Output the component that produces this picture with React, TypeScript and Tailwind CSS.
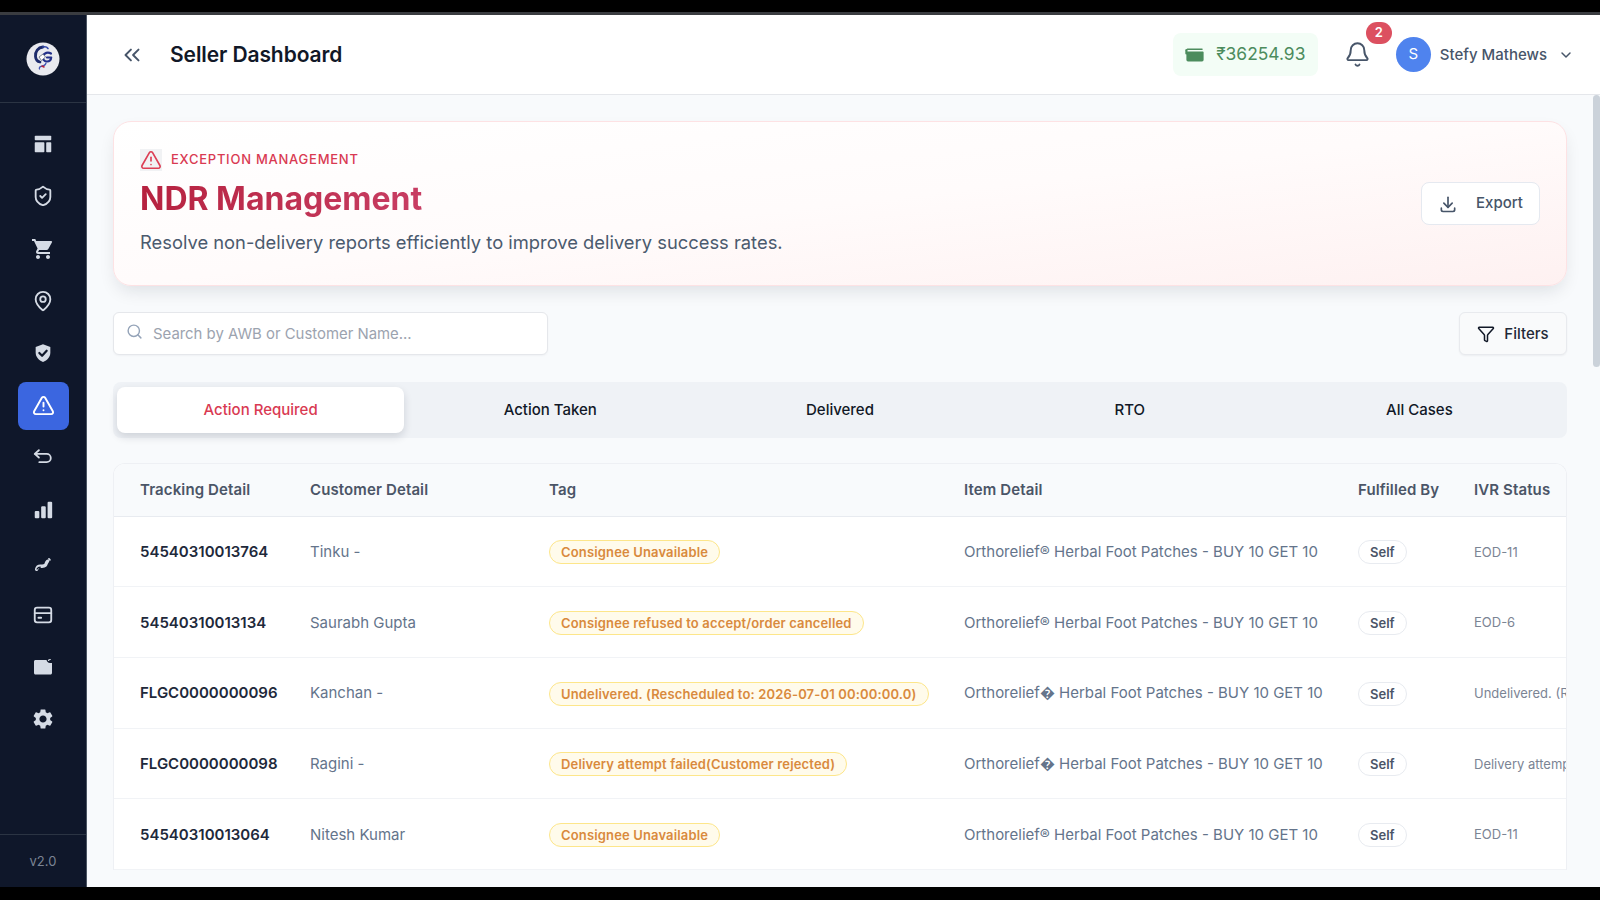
import { Bell, ChevronDown, ChevronsLeft, Funnel, Search, TriangleAlert, ShieldCheck, MapPin } from 'lucide-react';
import { MdShoppingCart, MdSettings } from 'react-icons/md';
import { TbDownload } from 'react-icons/tb';

const DashIcon = () => (
  <svg width="22" height="22" viewBox="0 0 24 24" fill="#d5dbe5">
    <rect x="3" y="3" width="18" height="5" rx="0.8" />
    <rect x="3" y="10" width="10.5" height="11" rx="0.8" />
    <rect x="15.5" y="10" width="5.5" height="11" rx="0.8" />
  </svg>
);

const ShieldFill = () => (
  <svg width="22" height="22" viewBox="0 0 24 24">
    <path fill="#d5dbe5" d="M12 2.5l8 3v6c0 5-3.4 8.6-8 10.2-4.600-1.600-8-5.200-8-10.200v-6z" />
    <path fill="none" stroke="#0f172a" strokeWidth="2.4" strokeLinecap="round" strokeLinejoin="round" d="M8 12l3 3 5-5.5" />
  </svg>
);

const UndoIcon = () => (
  <svg width="22" height="22" viewBox="0 0 24 24" fill="none" stroke="#d5dbe5" strokeWidth="2" strokeLinecap="round" strokeLinejoin="round">
    <path d="M7.500 3.500 3 7.500l4.500 4M3 7.500h13a4.500 4.500 0 0 1 0 9H8" />
  </svg>
);

const BarsIcon = () => (
  <svg width="22" height="22" viewBox="0 0 24 24" fill="#d5dbe5">
    <rect x="3" y="13" width="5" height="8" rx="1.2" />
    <rect x="10" y="8" width="5" height="13" rx="1.2" />
    <rect x="17" y="3" width="5" height="18" rx="1.2" />
  </svg>
);

const ToolIcon = () => (
  <svg width="22" height="22" viewBox="0 0 24 24" fill="none" strokeLinecap="round" strokeLinejoin="round">
    <path d="M5 19c.5-2 2-3.500 4-3.500 2.200 0 4 .5 5.500-1 1.200-1.100.8-3 2.500-4.500" stroke="#d5dbe5" strokeWidth="3.600" />
    <path d="M5.500 18.600c.7-1.300 2-2 3.500-2" stroke="#0f172a" strokeWidth="1.300" />
    <path d="M18.500 7.500l1 1" stroke="#d5dbe5" strokeWidth="2" />
  </svg>
);

const CardIcon = () => (
  <svg width="22" height="22" viewBox="0 0 24 24" fill="none" stroke="#d5dbe5" strokeWidth="2" strokeLinecap="round">
    <rect x="3" y="4" width="18" height="16" rx="2.5" />
    <path d="M3 10h18M7 15h3" />
  </svg>
);

const SideWalletIcon = () => (
  <svg width="24" height="24" viewBox="0 0 24 24">
    <path fill="#d5dbe5" d="M4.500 5H15.500c.3 1.600 1.500 2.800 3.500 3H21v10c0 .8-.7 1.500-1.500 1.500h-15C3.700 19.500 3 18.800 3 18V6.500C3 5.700 3.700 5 4.500 5z" />
    <path fill="none" stroke="#d5dbe5" strokeWidth="1.200" strokeLinecap="round" d="M17.500 5.500c.2-.7.800-1 1.800-1" />
  </svg>
);

const BalanceIcon = () => (
  <svg width="20" height="14" viewBox="0 0 18 13" fill="none">
    <path d="M2 1.200h13.500" stroke="#4c8c5d" strokeWidth="1.400" strokeLinecap="round" />
    <path d="M1 3.200 16 3.200c.6 0 1 .4 1 1V11c0 .8-.6 1.500-1.500 1.500h-13C1.600 12.500 1 11.800 1 11z" fill="#4c8c5d" />
    <path d="M1 2v3" stroke="#4c8c5d" strokeWidth="2" strokeLinecap="round" />
  </svg>
);

const Logo = () => (
  <svg width="34" height="34" viewBox="0 0 34 34">
    <circle cx="17" cy="17" r="16.500" fill="#e9eaef" />
    <path d="M17 5c-5 .5-8 4.500-7.500 9.500.3 3 2 5 4.500 5.500" fill="none" stroke="#1c2a6b" strokeWidth="2.800" strokeLinecap="round" />
    <path d="M17 5c2-.6 4 0 5 1.500" fill="none" stroke="#3448a8" strokeWidth="1.600" strokeLinecap="round" />
    <path d="M25 11.500c-3-1.800-7-.8-8 2.500-.8 2.800 1 5.500 4 5.500 2.200 0 4-1.500 4.200-4H21" fill="none" stroke="#24318a" strokeWidth="2.200" strokeLinecap="round" strokeLinejoin="round" />
    <path d="M13 15l4-3 2.500 3-4 3.500z" fill="#ffffff" stroke="#475569" strokeWidth="0.700" />
    <path d="M20 21c-.5 2.500-3 3-5 3.500-1.500.4-2 1.500-1.500 2.500" fill="none" stroke="#4456b5" strokeWidth="1.300" strokeLinecap="round" />
    <path d="M16 24l2 1" stroke="#b4233c" strokeWidth="1.600" strokeLinecap="round" />
  </svg>
);

const navIcons = [
  { key: 'dash', icon: <DashIcon /> },
  { key: 'shield', icon: <ShieldCheck size={22} color="#d5dbe5" strokeWidth={2} /> },
  { key: 'cart', icon: <MdShoppingCart size={24} color="#d5dbe5" /> },
  { key: 'pin', icon: <MapPin size={22} color="#d5dbe5" strokeWidth={2} /> },
  { key: 'shield2', icon: <ShieldFill /> },
  { key: 'alert', icon: <TriangleAlert size={23} color="#ffffff" strokeWidth={2} />, active: true },
  { key: 'undo', icon: <UndoIcon /> },
  { key: 'bars', icon: <BarsIcon /> },
  { key: 'tool', icon: <ToolIcon /> },
  { key: 'card', icon: <CardIcon /> },
  { key: 'wallet', icon: <SideWalletIcon /> },
  { key: 'gear', icon: <MdSettings size={24} color="#d5dbe5" /> },
];

const tabs = ['Action Required', 'Action Taken', 'Delivered', 'RTO', 'All Cases'];

const columns = ['Tracking Detail', 'Customer Detail', 'Tag', 'Item Detail', 'Fulfilled By', 'IVR Status'];

const rows = [
  { awb: '54540310013764', name: 'Tinku -', tag: 'Consignee Unavailable', item: 'Orthorelief® Herbal Foot Patches - BUY 10 GET 10', ivr: 'EOD-11' },
  { awb: '54540310013134', name: 'Saurabh Gupta', tag: 'Consignee refused to accept/order cancelled', item: 'Orthorelief® Herbal Foot Patches - BUY 10 GET 10', ivr: 'EOD-6' },
  { awb: 'FLGC0000000096', name: 'Kanchan -', tag: 'Undelivered. (Rescheduled to: 2026-07-01 00:00:00.0)', item: 'Orthorelief� Herbal Foot Patches - BUY 10 GET 10', ivr: 'Undelivered. (Rescheduled to: 2026-07-01 00:00:00.0)' },
  { awb: 'FLGC0000000098', name: 'Ragini -', tag: 'Delivery attempt failed(Customer rejected)', item: 'Orthorelief� Herbal Foot Patches - BUY 10 GET 10', ivr: 'Delivery attempt failed(Customer rejected)' },
  { awb: '54540310013064', name: 'Nitesh Kumar', tag: 'Consignee Unavailable', item: 'Orthorelief® Herbal Foot Patches - BUY 10 GET 10', ivr: 'EOD-11' },
];

export default function App() {
  return (
    <div className="h-screen flex flex-col bg-black overflow-hidden font-['Inter',sans-serif]">
      <div className="h-3 shrink-0 bg-black" />
      <div className="h-[3px] shrink-0 bg-[#3a3c40]" />
      <div className="flex-1 flex min-h-0">
        {/* Sidebar */}
        <aside className="w-[87px] shrink-0 bg-[#0f172a] border-r border-[#4b5563] flex flex-col">
          <div className="h-[88px] shrink-0 flex items-center justify-center border-b border-[#2b3443]">
            <Logo />
          </div>
          <nav className="flex-1 flex flex-col items-center pt-[15px]">
            {navIcons.map((n) => (
              <div key={n.key} className="h-[52.300px] w-full flex items-center justify-center">
                <div className={`w-[51px] h-12 rounded-lg flex items-center justify-center ${n.active ? 'bg-[#3b66e0]' : ''}`}>{n.icon}</div>
              </div>
            ))}
          </nav>
          <div className="h-[53px] shrink-0 flex items-center justify-center border-t border-[#2b3443] pt-[2px] text-[13px] text-[#7b8494]">v2.0</div>
        </aside>

        <div className="flex-1 min-w-0 flex flex-col bg-[#f8fafc]">
          {/* Header */}
          <header className="h-[80px] shrink-0 bg-white border-b border-[#e5e7eb] flex items-center pl-[32px] pr-[26px]">
            <ChevronsLeft size={26} color="#475569" strokeWidth={1.800} />
            <h1 className="ml-[25px] pt-[1px] text-[21px] font-semibold text-[#111827] tracking-[-0.1px]">Seller Dashboard</h1>
            <div className="ml-auto flex items-center">
              <div className="w-[145px] h-[43px] rounded-lg bg-[#f3fdf6] flex items-center justify-center gap-[11px] text-[#4c8c5d] text-[17.400px]">
                <BalanceIcon />
                <span>₹36254.93</span>
              </div>
              <div className="relative ml-[25px] w-[30px] flex justify-center">
                <Bell size={27} color="#475569" strokeWidth={1.700} />
                <span className="absolute -top-[19px] left-[23px] w-[26px] h-[22px] rounded-full bg-[#dc5060] text-white text-[13px] font-semibold flex items-center justify-center">2</span>
              </div>
              <div className="ml-[23px] w-[35px] h-[35px] rounded-full bg-[#4f83ee] text-white text-[15px] flex items-center justify-center">S</div>
              <span className="ml-[9px] pt-[1px] text-[15px] font-medium text-[#475569]">Stefy Mathews</span>
              <ChevronDown className="ml-[11px]" size={16} color="#475569" strokeWidth={2.200} />
            </div>
          </header>

          <div className="flex-1 min-h-0 flex">
            <main className="flex-1 min-w-0 overflow-hidden pl-[26px] pr-[26px] pt-[26px]">
              {/* Hero */}
              <section className="h-[165px] rounded-[18px] border border-[#fde2e4] bg-gradient-to-br from-white via-[#fffbfb] to-[#fef1f1] shadow-[0_8px_18px_-4px_rgba(15,23,42,0.12)] pl-[26px] pr-[26px] flex items-center justify-between">
                <div>
                  <div className="flex items-center gap-[9px]">
                    <span className="w-[22px] h-[22px] bg-[#f1f2f4] flex items-center justify-center">
                      <TriangleAlert size={22} color="#dc3f55" strokeWidth={1.800} />
                    </span>
                    <span className="text-[13px] font-medium uppercase tracking-[0.75px] text-[#d93a52]">Exception Management</span>
                  </div>
                  <h2 className="mt-[6px] text-[32px] leading-[44px] font-bold bg-gradient-to-r from-[#b6213f] to-[#c83d63] bg-clip-text text-transparent w-fit">NDR Management</h2>
                  <p className="mt-[7px] mb-[2px] text-[18.350px] leading-[28px] text-[#4b5a6e]">Resolve non-delivery reports efficiently to improve delivery success rates.</p>
                </div>
                <button className="w-[119px] h-[43px] rounded-lg bg-white border border-[#e5e9f0] flex items-center justify-center gap-[18px] text-[15px] font-medium text-[#475569]">
                  <TbDownload size={20} color="#475569" />
                  Export
                </button>
              </section>

              {/* Search and filters */}
              <div className="mt-[26px] flex items-center justify-between">
                <div className="w-[435px] h-[43px] rounded-md bg-white border border-[#e5e7eb] shadow-[0_1px_2px_rgba(15,23,42,0.04)] flex items-center pl-[12px] gap-[10px]">
                  <Search className="-mt-1" size={17} color="#94a3b8" strokeWidth={2} />
                  <span className="pt-[2px] text-[14.900px] text-[#9ca3af]">Search by AWB or Customer Name...</span>
                </div>
                <button className="w-[108px] h-[43px] rounded-md bg-[#f9fafb] border border-[#e8eaee] shadow-[0_1px_2px_rgba(15,23,42,0.05)] flex items-center justify-center gap-[9px] pt-[1px] text-[15px] font-medium text-[#1f2937]">
                  <Funnel size={18} color="#111827" strokeWidth={2} />
                  Filters
                </button>
              </div>

              {/* Tabs */}
              <div className="mt-[27px] h-[56px] rounded-lg bg-[#eff2f6] px-[4px] py-[5px] grid grid-cols-5 gap-[2.500px]">
                {tabs.map((t, i) => (
                  <div key={t} className={`rounded-lg flex items-center justify-center text-[15px] font-medium ${i === 0 ? 'bg-white text-[#d93a52] shadow-[0_4px_8px_rgba(15,23,42,0.14)]' : 'text-[#111827]'}`}>{t}</div>
                ))}
              </div>

              {/* Table */}
              <div className="mt-[25px] rounded-t-[12px] border border-b-0 border-[#eef0f4] bg-white overflow-hidden">
                <table className="table-fixed border-collapse w-[1640px]">
                  <colgroup>
                    <col className="w-[170px]" />
                    <col className="w-[239px]" />
                    <col className="w-[415px]" />
                    <col className="w-[394px]" />
                    <col className="w-[116px]" />
                    <col className="w-[306px]" />
                  </colgroup>
                  <thead>
                    <tr className="h-[52px] bg-[#f8fafc] border-b border-[#e8ebf0]">
                      {columns.map((c) => (
                        <th key={c} className="pl-[26px] text-left text-[15px] font-semibold tracking-[0.12px] text-[#4b5567] whitespace-nowrap">{c}</th>
                      ))}
                    </tr>
                  </thead>
                  <tbody>
                    {rows.map((r) => (
                      <tr key={r.awb} className="h-[70.700px] border-b border-[#f1f3f6]">
                        <td className="pl-[26px] pt-[2px] text-[15px] font-semibold text-[#1e293b] whitespace-nowrap">{r.awb}</td>
                        <td className="pl-[26px] pt-[2px] text-[15px] text-[#64748b] whitespace-nowrap">{r.name}</td>
                        <td className="pl-[26px] whitespace-nowrap">
                          <span className="inline-block align-middle h-6 leading-[22px] px-[11px] rounded-full bg-[#fffbeb] border border-[#fde68a] text-[13px] font-semibold tracking-[0.15px] text-[#d98a3d]">{r.tag}</span>
                        </td>
                        <td className="pl-[26px] pt-[2px] text-[15px] text-[#64748b] whitespace-nowrap">{r.item}</td>
                        <td className="pl-[26px] whitespace-nowrap">
                          <span className="inline-block align-middle h-6 leading-[22px] px-[11px] rounded-full border border-[#e8ebf0] text-[13px] font-semibold text-[#4b5567]">Self</span>
                        </td>
                        <td className="pl-[26px] pt-[2px] text-[13px] text-[#7b8494] whitespace-nowrap">{r.ivr}</td>
                      </tr>
                    ))}
                  </tbody>
                </table>
              </div>
            </main>
            <div className="w-[7px] shrink-0">
              <div className="h-[272px] rounded-full bg-[#cbd2da]" />
            </div>
          </div>
        </div>
      </div>
      <div className="h-[13px] shrink-0 bg-black" />
    </div>
  );
}
